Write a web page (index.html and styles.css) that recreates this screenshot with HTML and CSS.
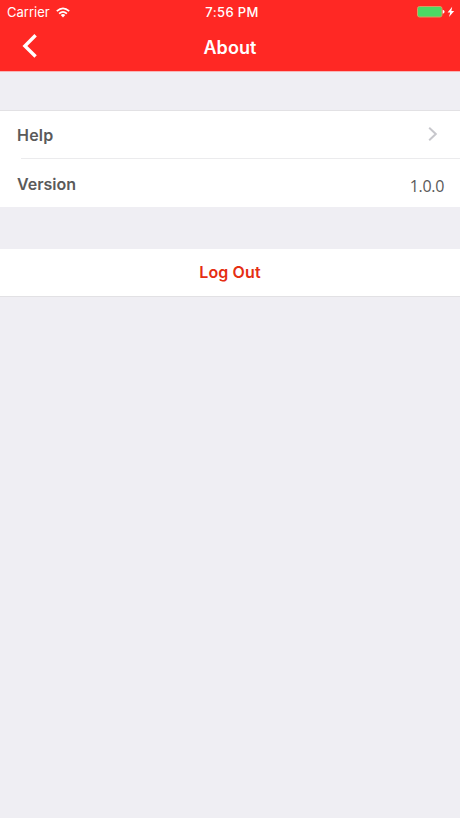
FILE: index.html
```html
<!DOCTYPE html>
<html lang="en">
<head>
    <meta charset="utf-8">
    <title>About</title>
    <link rel="stylesheet" href="styles.css">
</head>
<body>
    <header class="header">
        <div class="status">
            <div class="carrier">
                <span>Carrier</span>
                <svg class="wifi" viewBox="0 0 14 11" fill="none" stroke="#fff" stroke-width="1.7">
                    <path d="M.8 4.2Q7-1.6 13.2 4.2M3.1 6.6Q7 3 10.9 6.6"/>
                    <path d="M4.7 7.9Q7 6.1 9.3 7.9L7 10.4Z" fill="#fff" stroke="none"/>
                </svg>
            </div>
            <div class="time">7:56 PM</div>
            <div class="power">
                <svg width="38" height="12" viewBox="0 0 38 12">
                    <rect x=".5" y=".5" width="24.5" height="10.5" rx="2" fill="#4cd964" stroke="#d99a62"/>
                    <path d="M25.7 3.8Q27.6 4.2 27.6 5.8T25.7 7.8Z" fill="#fff"/>
                    <path d="M35.2 .8L30.6 6.5H33.2L32 11L37.2 4.9H34.4Z" fill="#fff"/>
                </svg>
            </div>
        </div>
        <div class="nav">
            <a class="back" aria-label="Back">
                <svg width="16" height="24" viewBox="0 0 16 24" fill="none" stroke="#fff" stroke-width="3.4">
                    <path d="M13.6 1.2L2.9 12L13.6 22.5"/>
                </svg>
            </a>
            <h1 class="title">About</h1>
        </div>
    </header>

    <main>
        <div class="list">
            <div class="row help">
                <span>Help</span>
                <svg class="chevron" width="10" height="16" viewBox="0 0 10 16" fill="none" stroke="#c7c7cc" stroke-width="2">
                    <path d="M1.2 1.8L7.8 8L1.2 14.2"/>
                </svg>
            </div>
            <div class="row version">
                <span>Version</span>
                <span class="value">1.0.0</span>
            </div>
        </div>
        <button class="logout">Log Out</button>
    </main>
</body>
</html>
```
FILE: styles.css
```css
* { box-sizing: border-box; }
body { margin: 0; min-height: 100vh; background: #efeef3; color: #5a5a5a; font-family: Inter, sans-serif; }

.header { height: 72px; background: #ff2824; border-bottom: 1px solid #f8b5b7; color: #fff; }
.status { display: grid; grid-template-columns: 1fr auto 1fr; height: 24px; padding: 0 5px 0 7px; align-items: center; font-size: 13px; line-height: 24px; }
.carrier { display: flex; align-items: center; gap: 6px; }
.wifi { width: 14px; height: 11px; }
.time { padding-left: 2px; font-weight: 500; letter-spacing: 0.35px; }
.power { display: flex; justify-content: flex-end; }

.nav { display: grid; grid-template-columns: 1fr auto 1fr; height: 47px; align-items: center; }
.back { display: flex; padding: 0 0 4px 22px; }
.title { margin: 0; font-size: 18px; font-weight: 600; line-height: 46px; letter-spacing: 0.1px; }

.list { margin-top: 38px; border-top: 1px solid #e2e1e4; background: #fff; }
.row { display: flex; height: 49px; padding: 0 16px 0 17px; align-items: center; justify-content: space-between; font-size: 16px; font-weight: 600; }
.help { height: 47px; letter-spacing: 0.2px; }
.version { padding-top: 1px; border-top: 1px solid transparent; border-image: linear-gradient(to right, #fff 22px, #ebebed 22px) 1; }
.chevron { margin: 0 6px 2px 0; }
.value { padding-top: 4px; font-family: "Open Sans", sans-serif; font-weight: 400; letter-spacing: -0.3px; }

.logout { display: block; width: 100%; height: 48px; margin-top: 42px; padding: 0; border: 0; border-bottom: 1px solid #e2e1e4; background: #fff; color: #e52e12; font: 600 16px/47px Inter, sans-serif; letter-spacing: 0.15px; }
```
